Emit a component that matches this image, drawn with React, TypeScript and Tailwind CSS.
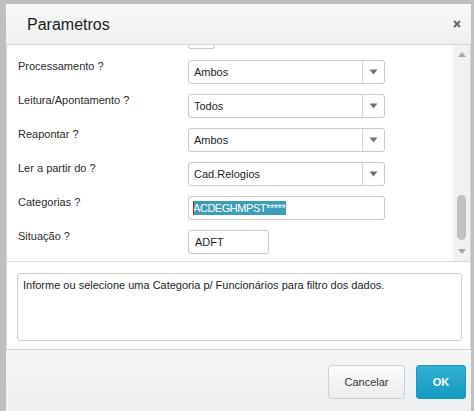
import React from "react";

const font = "font-['Liberation_Sans',Arial,sans-serif]";

function Caret() {
  return (
    <svg width="9" height="6" viewBox="0 0 9 6" aria-hidden="true">
      <path d="M0.5 0.5h8L4.5 5.5z" fill="#727272" />
    </svg>
  );
}

function SelectBox({ value }: { value: string }) {
  return (
    <div className="mt-[1px] flex h-[24px] w-[197px] rounded-[3px] border border-[#cacaca] bg-white">
      <div className="flex flex-1 items-center pl-[5px] text-[11px] text-[#1e1e1e]">{value}</div>
      <div className="flex w-[22px] items-center justify-center border-l border-[#d2d2d2]">
        <Caret />
      </div>
    </div>
  );
}

function Row({ label, children }: { label: string; children: React.ReactNode }) {
  return (
    <div className="flex h-[34px] items-start">
      <div className="w-[170px] text-[11px] leading-[14px] text-[#2b2b2b]">{label}</div>
      {children}
    </div>
  );
}

function Scrollbar() {
  return (
    <div className="flex w-[17px] flex-col items-center bg-[#f1f1f1] pt-[7px] pb-[7px]">
      <svg width="8" height="5" viewBox="0 0 8 5" aria-hidden="true">
        <path d="M0 5h8L4 0z" fill="#a9a9a9" />
      </svg>
      <div className="flex-1" />
      <div className="h-[45px] w-[9px] rounded-full bg-[#c1c1c1]" />
      <div className="h-[9px]" />
      <svg width="8" height="5" viewBox="0 0 8 5" aria-hidden="true">
        <path d="M0 0h8L4 5z" fill="#a9a9a9" />
      </svg>
    </div>
  );
}

export default function App() {
  return (
    <div className={`${font} h-[411px] w-[474px] overflow-hidden bg-[#bfbfbf] pt-[4px] pl-[6px] pr-[3px]`}>
      <div className="flex h-[407px] flex-col bg-white">
        {/* title bar */}
        <div className="flex h-[41px] items-center justify-between border-b border-[#d3d3d3] bg-gradient-to-b from-[#f7f8f8] to-[#eef0f0] pl-[21px] pr-[10px]">
          <span className="pt-[1px] text-[16px] text-[#1c1c1c]">Parametros</span>
          <svg width="8" height="8" viewBox="0 0 8 8" aria-hidden="true">
            <path d="M1 1l6 6M7 1L1 7" stroke="#66666c" strokeWidth="2" />
          </svg>
        </div>

        {/* parameter list */}
        <div className="flex h-[217px] border-x border-b border-[#d6d6d6]">
          <div className="flex-1 overflow-hidden pl-[11px]">
            <div className="ml-[170px] h-[4px] w-[27px] rounded-b-[3px] border border-t-0 border-[#cacaca]" />
            <div className="mt-[10px] flex flex-col">
              <Row label="Processamento ?">
                <SelectBox value="Ambos" />
              </Row>
              <Row label="Leitura/Apontamento ?">
                <SelectBox value="Todos" />
              </Row>
              <Row label="Reapontar ?">
                <SelectBox value="Ambos" />
              </Row>
              <Row label="Ler a partir do ?">
                <SelectBox value="Cad.Relogios" />
              </Row>
              <Row label="Categorias ?">
                <div className="mt-[1px] flex h-[24px] w-[197px] items-center rounded-[3px] border border-[#cacaca] bg-white pl-[4px]">
                  <span className="relative bg-[#3b9db8] pr-[1px] text-[11px] leading-[14px] tracking-[-0.45px] text-white">
                    <span className="absolute left-0 top-0 h-[14px] w-[1px] bg-[#8a3a2a]" />
                    ACDEGHMPST*****
                  </span>
                </div>
              </Row>
              <Row label="Situação ?">
                <div className="mt-[1px] flex h-[24px] w-[81px] items-center rounded-[3px] border border-[#cacaca] bg-white pl-[6px] text-[11px] text-[#1e1e1e]">
                  ADFT
                </div>
              </Row>
            </div>
          </div>
          <Scrollbar />
        </div>

        {/* help text */}
        <div className="border-x border-[#d6d6d6] pt-[11px] pb-[8px] pl-[10px] pr-[8px]">
          <div className="h-[68px] rounded-[3px] border border-[#cfcfcf] px-[5px] pt-[4px] text-[11px] leading-[14px] text-[#1e1e1e]">
            Informe ou selecione uma Categoria p/ Funcionários para filtro dos dados.
          </div>
        </div>

        {/* footer */}
        <div className="flex flex-1 items-start justify-end gap-[11px] border-t border-[#d3d3d3] bg-gradient-to-b from-[#f4f5f5] to-[#eeeff1] pt-[15px] pr-[5px]">
          <button className="h-[34px] w-[77px] rounded-[3px] border border-[#d0d0d0] bg-gradient-to-b from-[#fcfcfc] to-[#ececec] text-[11px] text-[#333]">
            Cancelar
          </button>
          <button className="h-[34px] w-[50px] rounded-[3px] border border-[#1b98bd] bg-gradient-to-b from-[#2eb1d4] to-[#169ac2] text-[11px] font-bold text-white">
            OK
          </button>
        </div>
      </div>
    </div>
  );
}
